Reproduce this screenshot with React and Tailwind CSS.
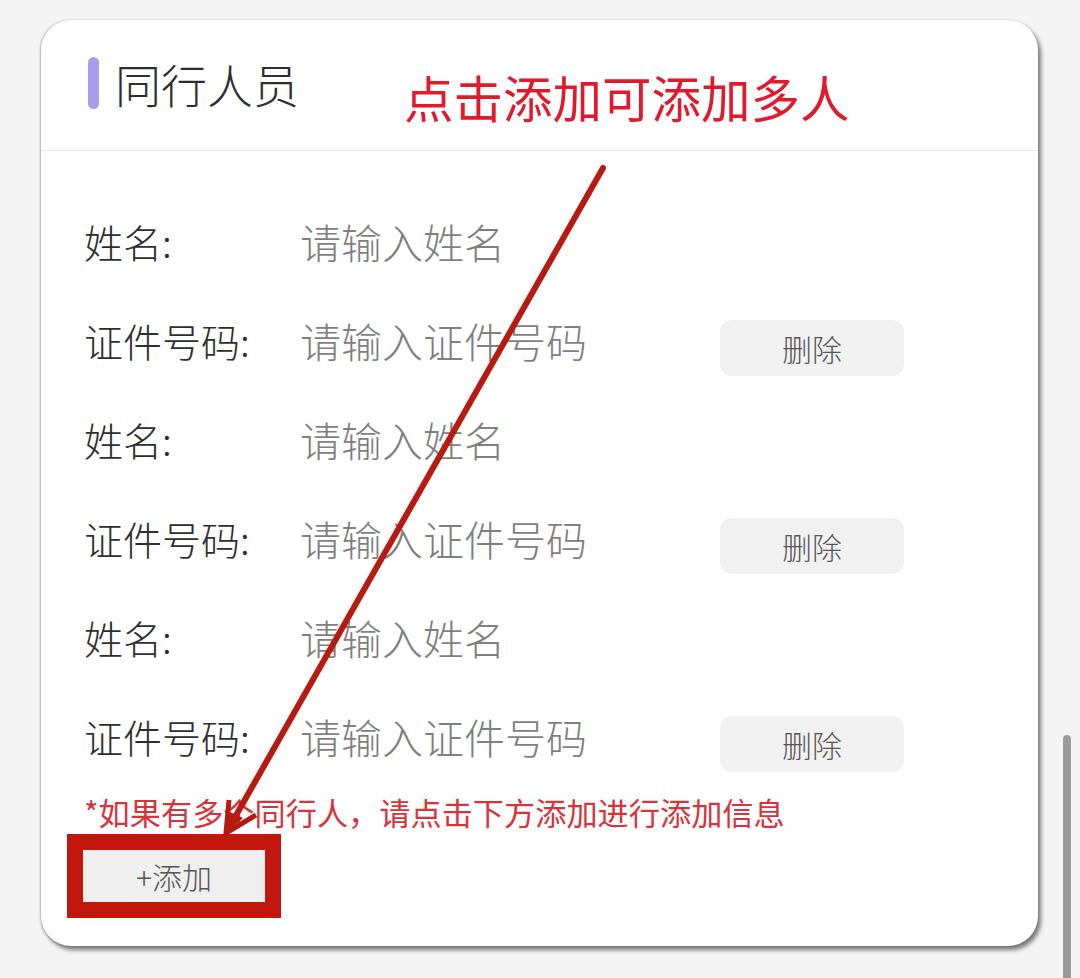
import React from "react";

const font = { fontFamily: '"Noto Sans CJK SC", "Noto Sans", sans-serif' };

function Row({ label, placeholder, del }) {
  return (
    <div className="flex h-[99px] items-center">
      <div className="w-[216px] shrink-0 text-[39px] font-light leading-none text-[#2e2e2e]">{label}</div>
      <div className="w-[420px] shrink-0 text-[41px] font-light leading-none text-[#7f7f7f]">{placeholder}</div>
      {del && (
        <div className="mt-[14px] flex h-[56px] w-[184px] items-center justify-center rounded-[12px] bg-[#f1f1f1] text-[30px] font-light leading-none text-[#555555]">
          删除
        </div>
      )}
    </div>
  );
}

export default function App() {
  const people = [0, 1, 2];
  return (
    <div className="relative h-[978px] w-[1080px] overflow-hidden bg-[#f4f4f4]" style={font}>
      <div className="pl-[41px] pt-[20px]">
        <div className="flex h-[926px] w-[997px] flex-col rounded-[30px] bg-white shadow-[3px_4px_4px_rgba(0,0,0,0.5),_-1px_0_2px_rgba(0,0,0,0.25)]">
          <div className="flex h-[131px] items-center border-b border-[#e8e8e8] pb-[4px] pl-[47px]">
            <div className="h-[52px] w-[11px] rounded-full bg-[#a79ee9]"></div>
            <div className="ml-[16px] text-[46px] font-light leading-none text-[#2e2e2e]">同行人员</div>
          </div>
          <div className="flex flex-col pl-[43px] pt-[41px]">
            {people.map((i) => (
              <React.Fragment key={i}>
                <Row label="姓名:" placeholder="请输入姓名" />
                <Row label="证件号码:" placeholder="请输入证件号码" del />
              </React.Fragment>
            ))}
            <div className="mt-[6px] text-[31.2px] leading-[40px] text-[#d8333b]">
              *如果有多个同行人，请点击下方添加进行添加信息
            </div>
            <div className="-ml-[17px] mt-[2px] w-fit border-[16px] border-[#c3160d]">
              <div className="flex h-[52px] w-[182px] items-center justify-center bg-[#efefef] text-[30px] font-light leading-none text-[#555555]">
                +添加
              </div>
            </div>
          </div>
        </div>
      </div>

      <div className="absolute left-[404px] top-[72px] text-[49.5px] leading-none text-[#e2182b]">
        点击添加可添加多人
      </div>

      <svg className="absolute left-0 top-0" width="1080" height="978" viewBox="0 0 1080 978">
        <line x1="603" y1="168" x2="230" y2="826" stroke="#b71a10" strokeWidth="6" strokeLinecap="round" />
        <polyline points="229,800 226,833 256,815" fill="none" stroke="#b71a10" strokeWidth="5" strokeLinejoin="miter" />
        <polygon points="226,833 230,812 243,818" fill="#b71a10" />
      </svg>

      <div className="absolute left-[1063px] top-[735px] h-[260px] w-[8px] rounded-full bg-[#9b9b9b]"></div>
    </div>
  );
}
